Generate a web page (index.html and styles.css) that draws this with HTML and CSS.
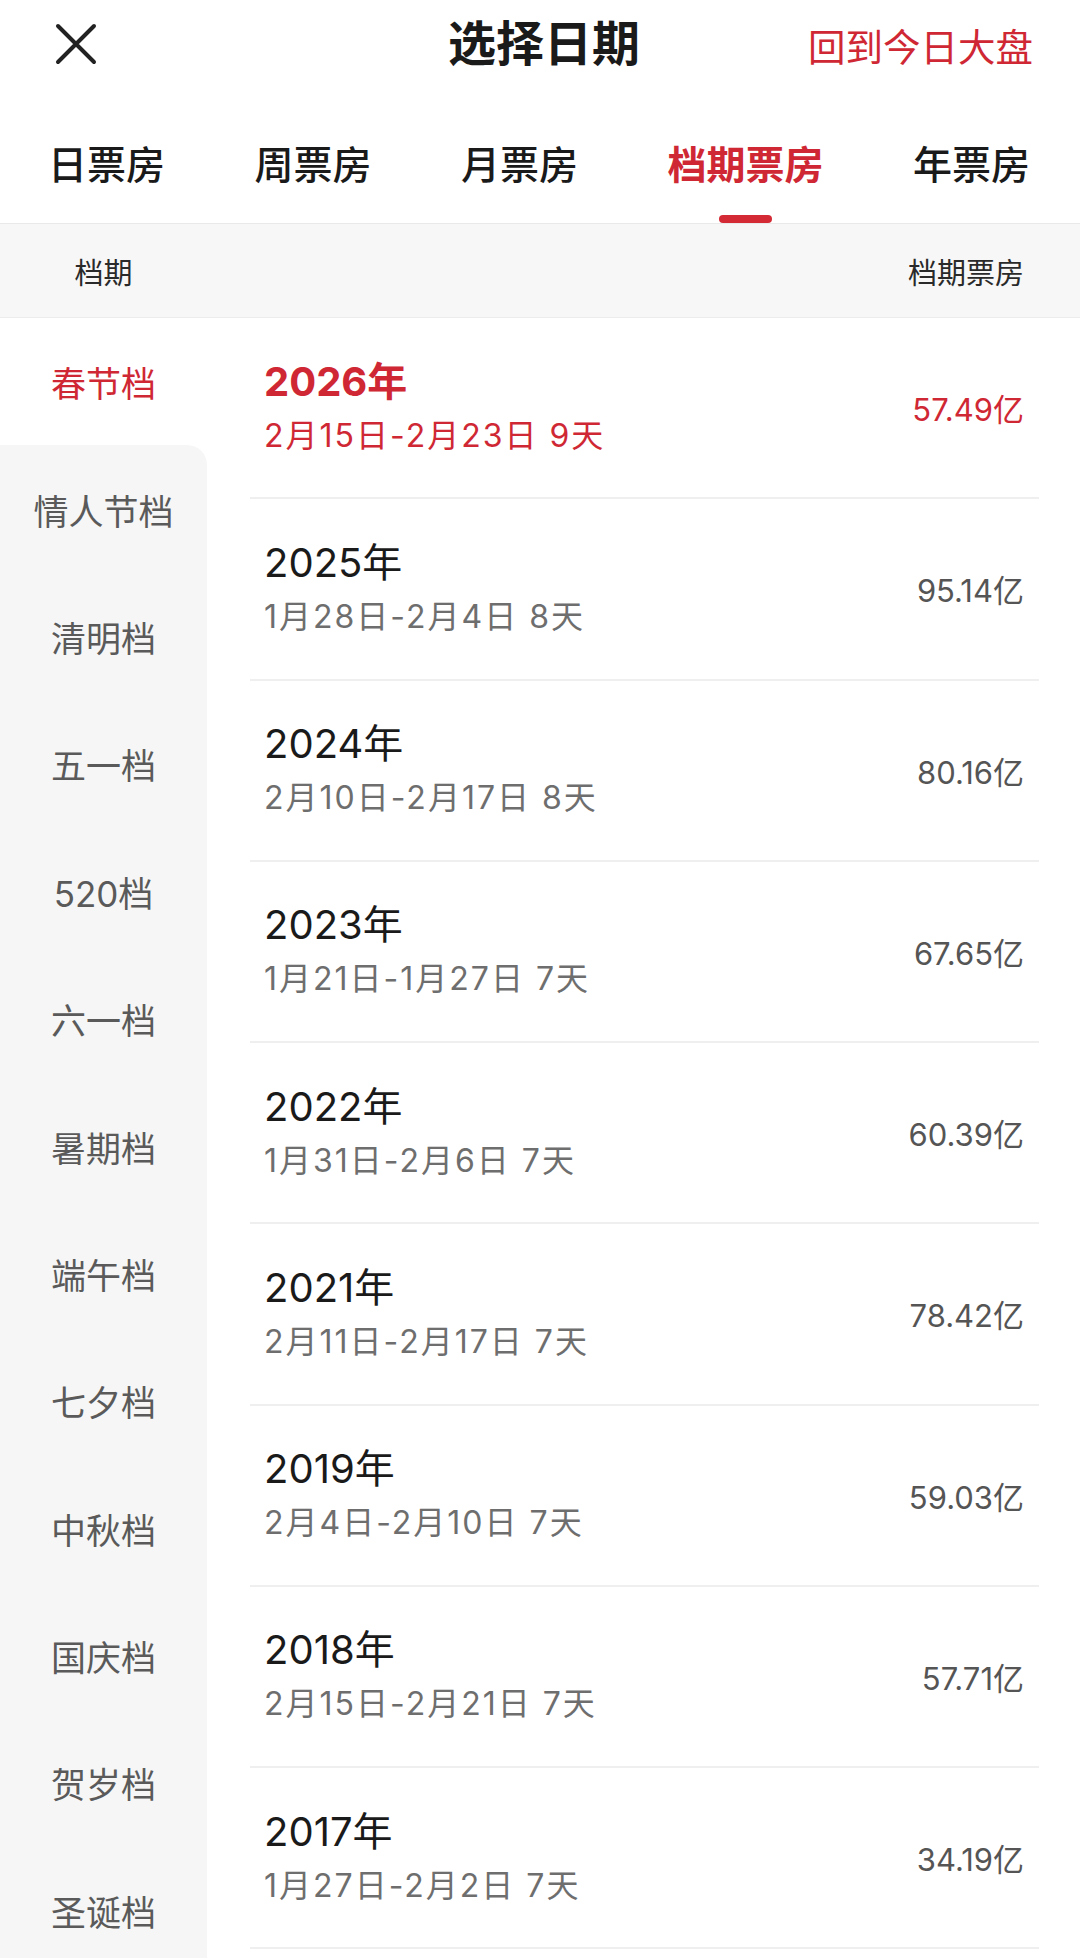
FILE: index.html
```html
<!DOCTYPE html>
<html lang="zh-CN">
<head>
    <meta charset="UTF-8">
    <meta name="viewport" content="width=device-width, initial-scale=1.0">
    <title>选择日期</title>
    <link rel="stylesheet" href="styles.css">
</head>
<body>
    <header class="topbar">
        <span class="close">
            <svg width="42" height="42" viewBox="0 0 42 42">
                <path d="M3 3 L39 39 M39 3 L3 39" stroke="#222" stroke-width="4" stroke-linecap="round" fill="none"/>
            </svg>
        </span>
        <h1 class="title">选择日期</h1>
        <a class="today">回到今日大盘</a>
    </header>

    <nav class="tabs">
        <div class="tab"><span class="label">日票房</span></div>
        <div class="tab"><span class="label">周票房</span></div>
        <div class="tab"><span class="label">月票房</span></div>
        <div class="tab active"><span class="label">档期票房</span><i class="bar"></i></div>
        <div class="tab"><span class="label">年票房</span></div>
    </nav>

    <div class="colhead">
        <span class="col-left">档期</span>
        <span class="col-right">档期票房</span>
    </div>

    <main class="content">
        <ul class="sidebar">
            <li class="active">春节档</li>
            <li class="after-active">情人节档</li>
            <li>清明档</li>
            <li>五一档</li>
            <li>520档</li>
            <li>六一档</li>
            <li>暑期档</li>
            <li>端午档</li>
            <li>七夕档</li>
            <li>中秋档</li>
            <li>国庆档</li>
            <li>贺岁档</li>
            <li>圣诞档</li>
        </ul>

        <ul class="list">
            <li class="row current">
                <div class="info">
                    <div class="year">2026年</div>
                    <div class="range">2月15日-2月23日 9天</div>
                </div>
                <div class="value">57.49亿</div>
            </li>
            <li class="row">
                <div class="info">
                    <div class="year">2025年</div>
                    <div class="range">1月28日-2月4日 8天</div>
                </div>
                <div class="value">95.14亿</div>
            </li>
            <li class="row">
                <div class="info">
                    <div class="year">2024年</div>
                    <div class="range">2月10日-2月17日 8天</div>
                </div>
                <div class="value">80.16亿</div>
            </li>
            <li class="row">
                <div class="info">
                    <div class="year">2023年</div>
                    <div class="range">1月21日-1月27日 7天</div>
                </div>
                <div class="value">67.65亿</div>
            </li>
            <li class="row">
                <div class="info">
                    <div class="year">2022年</div>
                    <div class="range">1月31日-2月6日 7天</div>
                </div>
                <div class="value">60.39亿</div>
            </li>
            <li class="row">
                <div class="info">
                    <div class="year">2021年</div>
                    <div class="range">2月11日-2月17日 7天</div>
                </div>
                <div class="value">78.42亿</div>
            </li>
            <li class="row">
                <div class="info">
                    <div class="year">2019年</div>
                    <div class="range">2月4日-2月10日 7天</div>
                </div>
                <div class="value">59.03亿</div>
            </li>
            <li class="row">
                <div class="info">
                    <div class="year">2018年</div>
                    <div class="range">2月15日-2月21日 7天</div>
                </div>
                <div class="value">57.71亿</div>
            </li>
            <li class="row">
                <div class="info">
                    <div class="year">2017年</div>
                    <div class="range">1月27日-2月2日 7天</div>
                </div>
                <div class="value">34.19亿</div>
            </li>
        </ul>
    </main>
</body>
</html>
```

FILE: styles.css
```css
body {
    margin: 0;
    height: 1958px;
    overflow: hidden;
    background-color: #fff;
    font-family: Inter, "Noto Sans CJK SC", sans-serif;
    color: #1a1a1a;
}

ul {
    list-style: none;
    margin: 0;
    padding: 0;
}

.topbar {
    display: grid;
    grid-template-columns: 1fr auto 1fr;
    align-items: center;
    height: 88px;
    padding: 0 47px 0 55px;
}

.topbar .close {
    display: flex;
}

.topbar .title {
    margin: 0;
    font-size: 48px;
    font-weight: 700;
    line-height: 60px;
    color: #1a1a1a;
}

.topbar .today {
    justify-self: end;
    font-size: 37.5px;
    color: #cf2834;
}

.tabs {
    display: flex;
    justify-content: space-between;
    height: 135px;
    padding: 0 50px 0 48px;
    border-bottom: 1px solid #e9e9e9;
}

.tab {
    display: flex;
    flex-direction: column;
    align-items: center;
    padding-top: 50px;
}

.tab .label {
    font-size: 39px;
    line-height: 54px;
    font-weight: 500;
    color: #1a1a1a;
}

.tab.active .label {
    color: #cf2834;
    font-weight: 700;
}

.tab .bar {
    margin-top: 23px;
    width: 53px;
    height: 8px;
    border-radius: 4px;
    background-color: #d42a35;
}

.colhead {
    display: flex;
    align-items: center;
    height: 93px;
    background-color: #f7f7f7;
    border-bottom: 1px solid #ececec;
    font-size: 29px;
    color: #2a2a2a;
}

.colhead .col-left {
    width: 207px;
    text-align: center;
}

.colhead .col-right {
    margin-left: auto;
    padding-right: 56px;
}

.content {
    display: flex;
}

.sidebar {
    width: 207px;
    flex-shrink: 0;
}

.sidebar li {
    height: 127.4px;
    display: flex;
    align-items: center;
    justify-content: center;
    font-size: 35px;
    color: #5a5a5a;
    background-color: #f6f6f6;
}

.sidebar li.active {
    background-color: #fff;
    color: #cf2834;
}

.sidebar li.after-active {
    border-top-right-radius: 20px;
}

.list {
    flex: 1;
    padding: 0 41px 0 43px;
}

.row {
    box-sizing: border-box;
    height: 181.25px;
    display: flex;
    align-items: center;
    justify-content: space-between;
    padding: 0 15px 0 14px;
    border-bottom: 2px solid #efefef;
}

.row .year {
    font-size: 40px;
    line-height: 56px;
    color: #1a1a1a;
}

.row .range {
    font-size: 32px;
    line-height: 52px;
    letter-spacing: 2px;
    color: #6e6e6e;
}

.row .value {
    font-size: 31px;
    color: #555;
}

.row.current .year {
    font-weight: 700;
    color: #cf2834;
}

.row.current .range,
.row.current .value {
    color: #cf2834;
}
```
